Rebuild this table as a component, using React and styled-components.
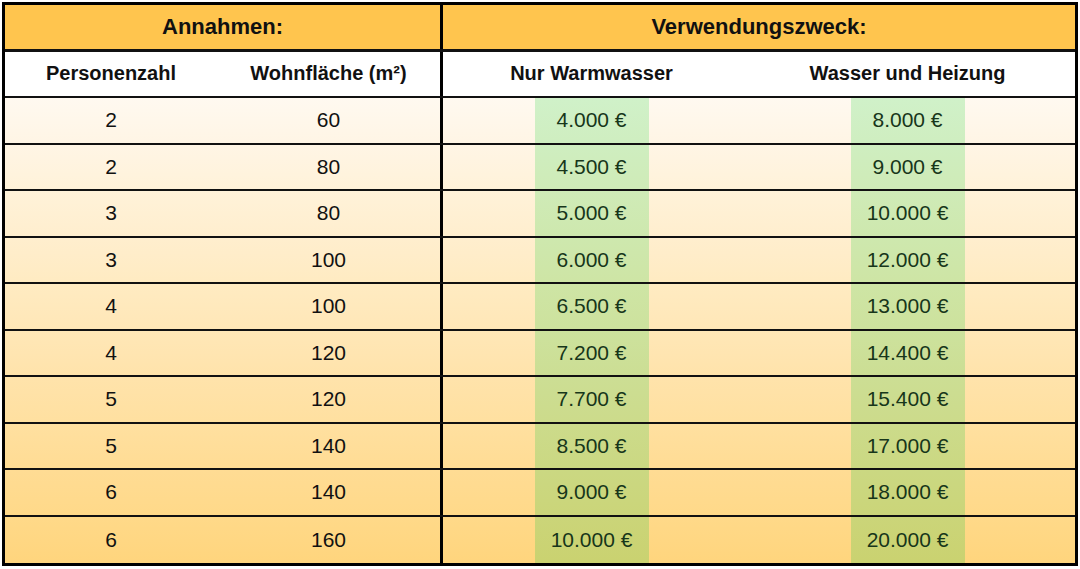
import React from 'react';
import styled, { createGlobalStyle } from 'styled-components';

const GlobalStyle = createGlobalStyle`
  html, body {
    margin: 0;
    padding: 0;
    background: #fff;
  }
  body {
    font-family: "Liberation Sans", Arial, sans-serif;
    color: #111;
  }
`;

// colour stops for the body gradient (top -> bottom)
const BG_TOP = [255, 249, 240];
const BG_BOTTOM = [255, 213, 125];
const GREEN_TOP = [208, 241, 201];
const GREEN_BOTTOM = [202, 210, 112];

const mix = (a, b, t) =>
  `rgb(${a.map((v, i) => Math.round(v + (b[i] - v) * t)).join(',')})`;

const Table = styled.div`
  margin: 2px 0 0 2px;
  width: 1076px;
  box-sizing: border-box;
  border: 3px solid #000;
`;

const Row = styled.div`
  display: grid;
  grid-template-columns: ${(p) => (p.$wide ? '435px 1fr' : '212px 223px 300px 1fr')};
  height: 46.5px;
  box-sizing: border-box;
  border-bottom: ${(p) => (p.$thick ? 3 : 2)}px solid #111;
  background: ${(p) => p.$bg || '#fff'};

  &:last-child {
    border-bottom: none;
  }
`;

const Cell = styled.div`
  display: flex;
  align-items: center;
  justify-content: center;
  border-left: ${(p) => (p.$divider ? '3px solid #000' : 'none')};
  font-size: ${(p) => (p.$title ? 22 : p.$head ? 20 : 21)}px;
  font-weight: ${(p) => (p.$title || p.$head ? 700 : 400)};
  color: #111;
`;

const Band = styled.div`
  width: 114px;
  height: 100%;
  display: flex;
  align-items: center;
  justify-content: center;
  color: #17361a;
  font-size: 21px;
  background: ${(p) => p.$bg};
`;

const rows = [
  [2, 60, '4.000 €', '8.000 €'],
  [2, 80, '4.500 €', '9.000 €'],
  [3, 80, '5.000 €', '10.000 €'],
  [3, 100, '6.000 €', '12.000 €'],
  [4, 100, '6.500 €', '13.000 €'],
  [4, 120, '7.200 €', '14.400 €'],
  [5, 120, '7.700 €', '15.400 €'],
  [5, 140, '8.500 €', '17.000 €'],
  [6, 140, '9.000 €', '18.000 €'],
  [6, 160, '10.000 €', '20.000 €'],
];

export default function App() {
  const n = rows.length;
  return (
    <>
      <GlobalStyle />
      <Table>
        <Row $wide $thick $bg="#ffc54e">
          <Cell $title>Annahmen:</Cell>
          <Cell $title $divider>Verwendungszweck:</Cell>
        </Row>
        <Row>
          <Cell $head>Personenzahl</Cell>
          <Cell $head>Wohnfläche (m²)</Cell>
          <Cell $head $divider>Nur Warmwasser</Cell>
          <Cell $head>Wasser und Heizung</Cell>
        </Row>
        {rows.map(([p, a, w, h], i) => {
          const t0 = i / n;
          const t1 = (i + 1) / n;
          const bg = `linear-gradient(to bottom, ${mix(BG_TOP, BG_BOTTOM, t0)}, ${mix(BG_TOP, BG_BOTTOM, t1)})`;
          const green = `linear-gradient(to bottom, ${mix(GREEN_TOP, GREEN_BOTTOM, t0)}, ${mix(GREEN_TOP, GREEN_BOTTOM, t1)})`;
          return (
            <Row key={i} $bg={bg}>
              <Cell>{p}</Cell>
              <Cell>{a}</Cell>
              <Cell $divider>
                <Band $bg={green}>{w}</Band>
              </Cell>
              <Cell>
                <Band $bg={green}>{h}</Band>
              </Cell>
            </Row>
          );
        })}
      </Table>
    </>
  );
}
